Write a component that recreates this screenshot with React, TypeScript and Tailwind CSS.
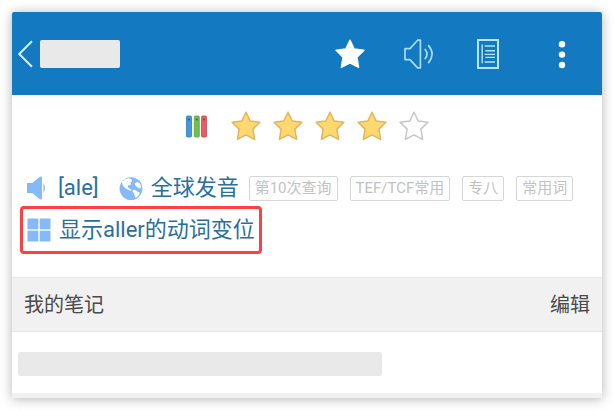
import { ReactNode } from 'react';

const STAR_PATH =
  'M15 1.2 L19.2 10 L28.9 11.3 L21.9 18.1 L23.6 28.4 L15 23.9 L6.4 28.4 L8.1 18.1 L1.1 11.3 L10.8 10 Z';

const tags = ['第10次查询', 'TEF/TCF常用', '专八', '常用词'];

function BackIcon() {
  return (
    <svg className="h-7 w-4" viewBox="0 0 16 28" fill="none" stroke="#d3f1ff" strokeWidth="2">
      <path d="M15 1.2 L2.2 14 L15 26.8" />
    </svg>
  );
}

function StarIcon({ fill, stroke }: { fill: string; stroke: string }) {
  return (
    <svg className="size-[30px]" viewBox="0 0 30 30">
      <path d={STAR_PATH} fill={fill} stroke={stroke} strokeWidth="1.5" strokeLinejoin="round" />
    </svg>
  );
}

function SpeakerIcon() {
  return (
    <svg className="size-[30px]" viewBox="0 0 30 30" fill="none" stroke="#a5dcf8" strokeWidth="1.7" strokeLinejoin="round">
      <path d="M1 9.6 H6 L13.6 1.2 H16.4 V28.8 H13.6 L6 20.6 H1 Z" />
      <path d="M21.2 10.4 Q24.8 15 21.2 19.6" strokeLinecap="round" />
      <path d="M24.6 6.6 Q31.6 15 24.6 23.6" strokeLinecap="round" />
    </svg>
  );
}

function NotesIcon() {
  return (
    <svg className="h-[30px] w-6" viewBox="0 0 24 30" fill="none" stroke="#b5e4fb" strokeWidth="1.4">
      <rect x="2" y="1" width="20" height="28" strokeWidth="2" />
      <path d="M6.2 5.5 V24.2" />
      <path d="M8.6 7 H19 M9.4 11.8 H19 M8.6 15.4 H19 M9.4 18.4 H19 M8.6 23 H19" />
    </svg>
  );
}

function MoreIcon() {
  return (
    <svg className="h-[30px] w-2" viewBox="0 0 8 30" fill="#ffffff">
      <circle cx="4" cy="5.2" r="3.2" />
      <circle cx="4" cy="15.6" r="3.2" />
      <circle cx="4" cy="26" r="3.2" />
    </svg>
  );
}

function BooksIcon() {
  const books = [
    { x: 0, fill: '#4299da', edge: '#2f7fbd' },
    { x: 7.8, fill: '#6fc04f', edge: '#58a33d' },
    { x: 15, fill: '#ec5a64', edge: '#cc4650' },
  ];
  return (
    <svg className="h-6 w-[21px]" viewBox="0 0 21 24">
      {books.map(book => (
        <g key={book.x}>
          <rect x={book.x + 0.5} y="2" width="5" height="21" rx="1" fill={book.fill} stroke={book.edge} strokeWidth="0.8" />
          <circle cx={book.x + 3} cy="5.6" r="1" fill="#3f5a78" />
        </g>
      ))}
    </svg>
  );
}

function VolumeIcon() {
  return (
    <svg className="size-6" viewBox="0 0 24 24" fill="#86b9fb">
      <path d="M1 7 H6.4 L12.8 1.4 Q16 -0.6 16 1.4 V22.6 Q16 24.6 12.8 22.6 L6.4 17 H1 Z" />
      <path d="M17.4 7 Q20.4 12 17.4 17 Z" />
    </svg>
  );
}

function GlobeIcon() {
  return (
    <svg className="size-6" viewBox="0 0 24 24">
      <circle cx="12" cy="12.6" r="11.4" fill="#86b9fb" />
      <g fill="#ffffff">
        <path d="M3 5.8 Q5.4 3 9.4 2.2 L12.6 3.2 L13 5.4 L11.4 6.4 L12.2 8.4 L9.6 9 L8.6 11 L10.4 12.6 L12.4 13.8 L12 14.8 L8.4 13.4 L5.4 11.4 L3.4 8.6 Z" />
        <path d="M15.6 7.4 L18 6 L20.4 7 L22.4 10.6 L21.2 12.4 L18.8 11.6 L16.8 10 Z" />
        <path d="M13.2 14.4 L16 13.8 L18.4 15.6 L21 16.8 L19.4 19.8 L16.6 22 L15.4 18.6 Z" />
      </g>
    </svg>
  );
}

function GridIcon() {
  return (
    <svg className="size-6" viewBox="0 0 24 24" fill="#86b9fb">
      <rect x="0.5" y="0.5" width="10.8" height="10.8" />
      <rect x="12.7" y="0.5" width="10.8" height="10.8" />
      <rect x="0.5" y="12.7" width="10.8" height="10.8" />
      <rect x="12.7" y="12.7" width="10.8" height="10.8" />
    </svg>
  );
}

function HeaderButton({ label, children }: { label: string; children: ReactNode }) {
  return (
    <button type="button" aria-label={label} className="flex min-w-[30px] justify-center">
      {children}
    </button>
  );
}

export default function App() {
  return (
    <div className="bg-white p-3 font-[Roboto,'Noto_Sans_CJK_SC',sans-serif]">
      <main className="overflow-hidden rounded-xs bg-white shadow-[0_1px_12px_rgba(0,0,0,0.3)]">
        <header className="flex h-[83px] items-center justify-between bg-[#137ac1] pr-5 pl-[5px]">
          <div className="flex items-center gap-[7px]">
            <button type="button" aria-label="返回">
              <BackIcon />
            </button>
            <div className="h-7 w-20 rounded-xs bg-[#e9e9e9]" />
          </div>
          <div className="flex items-center gap-[39px]">
            <HeaderButton label="收藏">
              <StarIcon fill="#ffffff" stroke="#ffffff" />
            </HeaderButton>
            <HeaderButton label="发音">
              <SpeakerIcon />
            </HeaderButton>
            <HeaderButton label="笔记">
              <NotesIcon />
            </HeaderButton>
            <button type="button" aria-label="更多" className="flex w-10 justify-center">
              <MoreIcon />
            </button>
          </div>
        </header>

        <div className="flex items-center justify-center gap-6 pt-4">
          <BooksIcon />
          <div className="flex gap-3">
            {[1, 2, 3, 4, 5].map(n => (
              <StarIcon
                key={n}
                fill={n <= 4 ? '#ffd970' : '#ffffff'}
                stroke={n <= 4 ? '#e3b45c' : '#c6c6c6'}
              />
            ))}
          </div>
        </div>

        <section className="px-2 pt-8 pb-[23px] text-[22px] leading-[30px] text-[#2a6f9f]">
          <div className="flex items-center pl-1.5">
            <button type="button" className="flex items-center gap-2">
              <VolumeIcon />
              [ale]
            </button>
            <button type="button" className="ml-5 flex items-center gap-2">
              <GlobeIcon />
              全球发音
            </button>
            <ul className="ml-2.5 flex gap-3 text-[15px] leading-[23px] whitespace-nowrap text-[#c2c2c2]">
              {tags.map(tag => (
                <li key={tag} className="rounded-xs border border-[#d6d6d6] px-[5px]">
                  {tag}
                </li>
              ))}
            </ul>
          </div>
          <button
            type="button"
            className="mt-[3px] flex h-12 items-center gap-2 rounded-sm border-3 border-[#fb4240] px-1"
          >
            <GridIcon />
            显示aller的动词变位
          </button>
        </section>

        <div className="flex h-[55px] items-center justify-between border-y border-[#e6e6e6] bg-[#f1f1f1] px-3 text-xl text-[#4a4a4a]">
          <h2>我的笔记</h2>
          <button type="button">编辑</button>
        </div>

        <div className="border-b-[5px] border-[#f1f1f1] px-1.5 pt-5 pb-[17px]">
          <div className="h-6 w-[63%] rounded-xs bg-[#e9e9e9]" />
        </div>
      </main>
    </div>
  );
}
